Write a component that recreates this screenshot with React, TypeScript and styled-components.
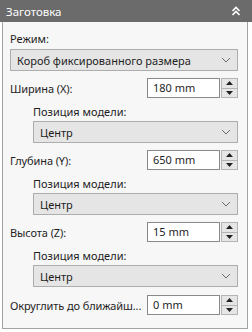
import styled, { createGlobalStyle } from 'styled-components'

const GlobalStyle = createGlobalStyle`
  html, body {
    margin: 0;
    padding: 0;
    background: #ffffff;
  }
  body {
    font-family: "Noto Sans", "Open Sans", sans-serif;
    font-size: 11px;
    color: #1e1e1e;
  }
`

const positions = ['Центр']

function Chevron() {
  return (
    <svg width="10" height="6" viewBox="0 0 10 6">
      <polyline points="1,1 5,5 9,1" fill="none" stroke="#6f6f6f" strokeWidth="1" />
    </svg>
  )
}

function CollapseIcon() {
  return (
    <svg width="10" height="10" viewBox="0 0 10 10">
      <polyline points="1.5,5 5,1.5 8.5,5" fill="none" stroke="#ffffff" strokeWidth="1.6" />
      <polyline points="1.5,9 5,5.5 8.5,9" fill="none" stroke="#ffffff" strokeWidth="1.6" />
    </svg>
  )
}

function Select({ value, indent }: { value: string; indent?: boolean }) {
  return (
    <SelectBox $indent={indent}>
      <span>{value}</span>
      <Chevron />
    </SelectBox>
  )
}

function NumberField({ label, value }: { label: string; value: string }) {
  return (
    <FieldRow>
      <FieldLabel>{label}</FieldLabel>
      <InputWrap>
        <Input>{value}</Input>
        <Spinner>
          <SpinButton>
            <svg width="7" height="4" viewBox="0 0 7 4"><polygon points="0,4 3.5,0 7,4" fill="#222" /></svg>
          </SpinButton>
          <SpinButton>
            <svg width="7" height="4" viewBox="0 0 7 4"><polygon points="0,0 7,0 3.5,4" fill="#222" /></svg>
          </SpinButton>
        </Spinner>
      </InputWrap>
    </FieldRow>
  )
}

function Axis({ label, value }: { label: string; value: string }) {
  return (
    <AxisBlock>
      <NumberField label={label} value={value} />
      <SubLabel>Позиция модели:</SubLabel>
      <Select value={positions[0]} indent />
    </AxisBlock>
  )
}

export default function App() {
  return (
    <>
      <GlobalStyle />
      <Panel>
        <Header>
          <span>Заготовка</span>
          <CollapseIcon />
        </Header>
        <Body>
          <TopLabel>Режим:</TopLabel>
          <Select value="Короб фиксированного размера" />
          <Axis label="Ширина (X):" value="180 mm" />
          <Axis label="Глубина (Y):" value="650 mm" />
          <Axis label="Высота (Z):" value="15 mm" />
          <LastRow>
            <NumberField label="Округлить до ближайш..." value="0 mm" />
          </LastRow>
        </Body>
      </Panel>
    </>
  )
}

const Panel = styled.div`
  width: 252px;
  height: 332px;
  display: flex;
  flex-direction: column;
`

const Header = styled.div`
  height: 22px;
  background: #6b6b6b;
  color: #ffffff;
  display: flex;
  align-items: center;
  justify-content: space-between;
  padding: 0 11px 0 6px;
  font-size: 11.5px;
`

const Body = styled.div`
  margin: 0 4px 3px 2px;
  border: 1px solid #a3a3a3;
  border-top: none;
  background: #f7f7f7;
  padding: 9px 9px 0 7px;
  flex: 1;
  display: flex;
  flex-direction: column;
`

const TopLabel = styled.div`
  height: 16px;
  line-height: 16px;
  margin-bottom: 2px;
`

const SelectBox = styled.div<{ $indent?: boolean }>`
  height: 20px;
  margin-left: ${p => (p.$indent ? '23px' : '0')};
  border: 1px solid #adadad;
  background: #e5e5e5;
  display: flex;
  align-items: center;
  justify-content: space-between;
  padding: 0 6px 0 6px;
`

const AxisBlock = styled.div`
  display: flex;
  flex-direction: column;
  margin-top: 7px;
`

const FieldRow = styled.div`
  display: flex;
  align-items: center;
  justify-content: space-between;
  gap: 2px;
  height: 20px;
`

const FieldLabel = styled.span`
  white-space: nowrap;
  letter-spacing: -0.1px;
`

const InputWrap = styled.div`
  display: flex;
  height: 20px;
  flex-shrink: 0;
`

const Input = styled.div`
  width: 66px;
  height: 18px;
  line-height: 17px;
  border: 1px solid #8a8a8a;
  background: #ffffff;
  padding-left: 5px;
`

const Spinner = styled.div`
  width: 15px;
  margin-left: 1px;
  display: flex;
  flex-direction: column;
  border: 1px solid #b4b4b4;
  height: 18px;
`

const SpinButton = styled.div`
  flex: 1;
  display: flex;
  align-items: center;
  justify-content: center;
  background: #e6e6e6;
  & + & {
    border-top: 1px solid #b4b4b4;
  }
`

const SubLabel = styled.div`
  height: 16px;
  line-height: 16px;
  margin: 6px 0 1px 23px;
`

const LastRow = styled.div`
  margin-top: 8px;
`
